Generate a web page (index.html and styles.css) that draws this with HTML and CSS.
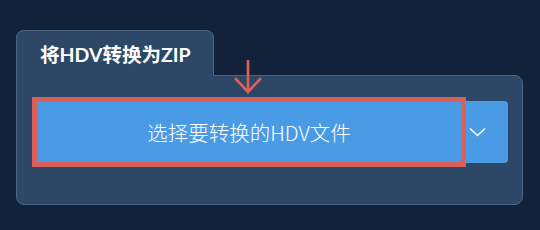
FILE: index.html
```html
<!DOCTYPE html>
<html lang="zh">

<head>
    <meta charset="UTF-8">
    <title>将HDV转换为ZIP</title>
    <link rel="stylesheet" href="styles.css">
</head>

<body>
    <div class="converter">
        <div class="tab">将HDV转换为ZIP</div>
        <div class="panel">
            <div class="split-button">
                <div class="main-wrap">
                    <svg class="hint-arrow" width="30" height="34" viewBox="0 0 30 34">
                        <path d="M15 0 V32 M2 18 L15 32 L28 18" fill="none" stroke="#dc605a" stroke-width="2.6" />
                    </svg>
                    <button class="main-btn">选择要转换的HDV文件</button>
                </div>
                <button class="menu-btn">
                    <svg width="17" height="10" viewBox="0 0 17 10">
                        <path d="M1 1.5 L8.5 8.5 L16 1.5" fill="none" stroke="#fff" stroke-width="1.5" />
                    </svg>
                </button>
            </div>
        </div>
    </div>
</body>

</html>
```

FILE: styles.css
```css
:root {
    --page: #11223a;
    --panel: #2c4866;
    --edge: #4b6586;
    --blue: #4a9be5;
    --red: #dc605a;
}

body {
    margin: 0;
    padding: 30px 17px 0 16px;
    background-color: var(--page);
    font-family: 'Lato', 'Noto Sans CJK SC', sans-serif;
    color: white;
}

.converter {
    width: 507px;
}

.tab {
    position: relative;
    z-index: 1;
    width: 198px;
    height: 46px;
    box-sizing: border-box;
    padding: 12px 0 0 23px;
    margin-bottom: -1px;
    background-color: var(--panel);
    border: 1px solid var(--edge);
    border-bottom: none;
    border-radius: 8px 8px 0 0;
    font-size: 19.5px;
    font-weight: bold;
    line-height: 24px;
}

.panel {
    height: 130px;
    box-sizing: border-box;
    padding: 21px 14px 0 15px;
    background-color: var(--panel);
    border: 1px solid var(--edge);
    border-radius: 0 8px 8px 8px;
}

.split-button {
    display: flex;
    align-items: center;
}

.main-wrap {
    position: relative;
}

.hint-arrow {
    position: absolute;
    left: 50%;
    bottom: 100%;
    margin-left: -16px;
    margin-bottom: 3px;
}

.main-btn {
    display: block;
    width: 434px;
    height: 70px;
    box-sizing: border-box;
    border: 5px solid var(--red);
    background-color: var(--blue);
    color: white;
    font-family: 'Noto Sans CJK SC', sans-serif;
    font-weight: 300;
    font-size: 20.5px;
    padding: 0;
}

.menu-btn {
    display: flex;
    align-items: center;
    width: 42px;
    height: 62px;
    border: none;
    border-radius: 0 4px 4px 0;
    background-color: var(--blue);
    padding: 0 0 0 3px;
}
```
